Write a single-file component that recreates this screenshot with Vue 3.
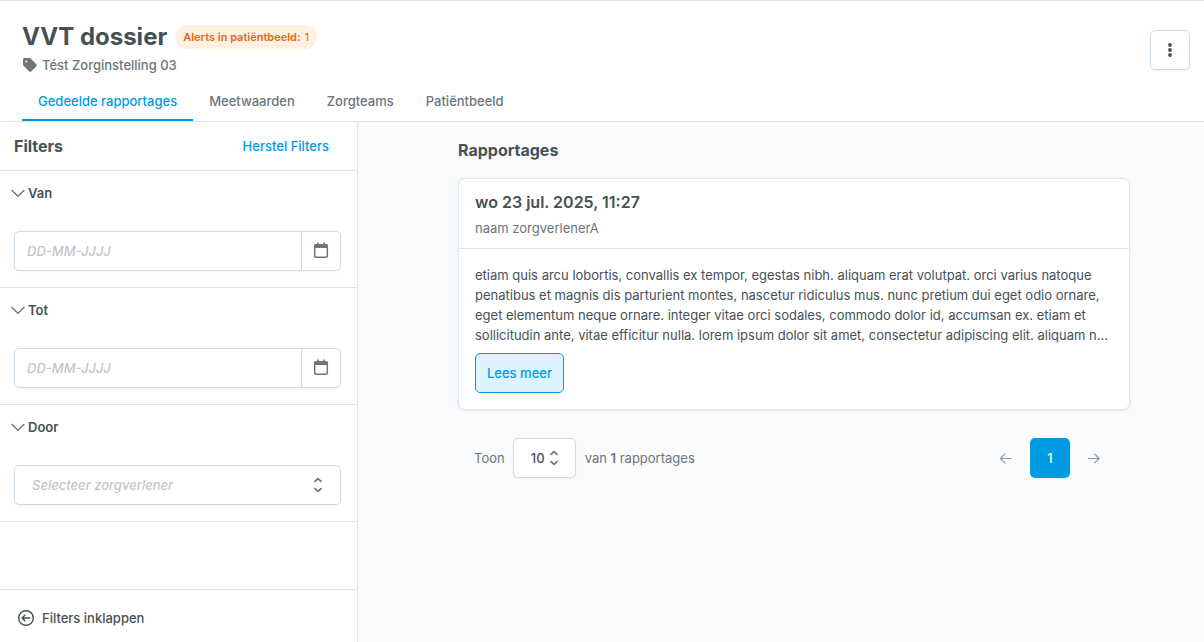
<script setup>
import { ref } from "vue";

const tabs = ["Gedeelde rapportages", "Meetwaarden", "Zorgteams", "Patiëntbeeld"];
const activeTab = ref(0);

const dateFilters = ref([
  { label: "Van", value: "" },
  { label: "Tot", value: "" },
]);

const reportLines = [
  "etiam quis arcu lobortis, convallis ex tempor, egestas nibh. aliquam erat volutpat. orci varius natoque",
  "penatibus et magnis dis parturient montes, nascetur ridiculus mus. nunc pretium dui eget odio ornare,",
  "eget elementum neque ornare. integer vitae orci sodales, commodo dolor id, accumsan ex. etiam et",
  "sollicitudin ante, vitae efficitur nulla. lorem ipsum dolor sit amet, consectetur adipiscing elit. aliquam n…",
];
</script>

<template>
  <div class="page">
    <header class="header">
      <div class="header-top">
        <div>
          <div class="title-row">
            <h1>VVT dossier</h1>
            <span class="badge"><b>Alerts in patiëntbeeld:</b> 1</span>
          </div>
          <div class="institution">
            <svg width="16" height="16" viewBox="0 0 16 16">
              <path
                fill-rule="evenodd"
                d="M1 2.500C1 1.700 1.600 1.100 2.400 1.100h5c.5 0 .9.2 1.200.5l5.600 5.400c.7.7.7 1.700 0 2.400l-4.800 4.800c-.7.7-1.700.7-2.400 0L1.600 8.700c-.4-.4-.6-.8-.6-1.300zM4.300 3.400a1 1 0 1 0 0 2 1 1 0 0 0 0-2z"
              />
            </svg>
            <span>Tést Zorginstelling 03</span>
          </div>
        </div>
        <button class="menu-button">
          <svg width="16" height="16" viewBox="0 0 16 16">
            <circle cx="8" cy="3" r="1.9" />
            <circle cx="8" cy="8" r="1.9" />
            <circle cx="8" cy="13" r="1.9" />
          </svg>
        </button>
      </div>
      <nav class="tabs">
        <button
          v-for="(tab, i) in tabs"
          :key="tab"
          class="tab"
          :class="{ active: i === activeTab }"
          @click="activeTab = i"
        >
          {{ tab }}
        </button>
      </nav>
    </header>

    <div class="body">
      <aside class="sidebar">
        <div class="sidebar-head">
          <h2>Filters</h2>
          <button class="link">Herstel Filters</button>
        </div>
        <section v-for="filter in dateFilters" :key="filter.label" class="filter">
          <div class="filter-title">
            <svg class="chevron" width="14" height="10" viewBox="0 0 14 10">
              <path d="M.6 2 7 8.300 13.400 2" />
            </svg>
            {{ filter.label }}
          </div>
          <div class="field">
            <input v-model="filter.value" type="text" placeholder="DD-MM-JJJJ" />
            <button class="calendar">
              <svg width="16" height="18" viewBox="0 0 16 18">
                <path d="M5 .5v2M11 .5v2" />
                <rect x="1.700" y="2.700" width="12.600" height="12.600" rx="1.200" />
                <path class="bar" d="M1.500 2.500h13v3.500h-13z" />
              </svg>
            </button>
          </div>
        </section>
        <section class="filter">
          <div class="filter-title">
            <svg class="chevron" width="14" height="10" viewBox="0 0 14 10">
              <path d="M.6 2 7 8.300 13.400 2" />
            </svg>
            Door
          </div>
          <div class="field select">
            <span>Selecteer zorgverlener</span>
            <svg class="sort" width="10" height="16" viewBox="0 0 10 16">
              <path d="M1.400 4.900 5 1.700l3.600 3.200M1.400 11.100 5 14.300l3.600-3.200" />
            </svg>
          </div>
        </section>
        <button class="collapse">
          <svg width="16" height="16" viewBox="0 0 16 16">
            <circle cx="8" cy="8" r="7.300" />
            <path d="M12.300 8H4.300M7.300 4.800 4.100 8l3.200 3.200" />
          </svg>
          Filters inklappen
        </button>
      </aside>

      <main class="content">
        <h2>Rapportages</h2>
        <article class="card">
          <div class="card-head">
            <h3>wo 23 jul. 2025, 11:27</h3>
            <div class="author">naam zorgverlenerA</div>
          </div>
          <div class="card-body">
            <p>
              <span v-for="line in reportLines" :key="line">{{ line }}</span>
            </p>
            <button class="more">Lees meer</button>
          </div>
        </article>
        <div class="pagination">
          <span>Toon</span>
          <button class="page-size">
            10
            <svg class="sort" width="10" height="16" viewBox="0 0 10 16">
              <path d="M1.400 4.900 5 1.700l3.600 3.200M1.400 11.100 5 14.300l3.600-3.200" />
            </svg>
          </button>
          <span>van <b>1</b> rapportages</span>
          <div class="pages">
            <svg class="arrow" width="12" height="12" viewBox="0 0 12 12">
              <path d="M11.500 6.500H.5M5.200 1.700.4 6.500l4.800 4.800" />
            </svg>
            <button class="current">1</button>
            <svg class="arrow" width="12" height="12" viewBox="0 0 12 12">
              <path d="M0 6.500h11M6.300 1.700 11.100 6.500l-4.800 4.800" />
            </svg>
          </div>
        </div>
      </main>
    </div>
  </div>
</template>

<style>
body {
  margin: 0;
}
</style>

<style scoped>
* {
  box-sizing: border-box;
}
.page {
  display: flex;
  flex-direction: column;
  height: 100vh;
  border-top: 1px solid #dee0e4;
  background: #fff;
  color: #465156;
  font-family: Inter, sans-serif;
  font-size: 13px;
  line-height: 20px;
}
h1,
h2,
h3,
p {
  margin: 0;
}
button {
  padding: 0;
  border: 0;
  background: none;
  color: inherit;
  font: inherit;
  cursor: pointer;
}
svg {
  flex: none;
  display: block;
}
.header {
  height: 121px;
  border-bottom: 1px solid #dde6ec;
}
.header-top {
  display: flex;
  justify-content: space-between;
  height: 80px;
  padding: 20px 14px 0 22px;
}
.title-row {
  display: flex;
  align-items: center;
  gap: 8px;
  height: 32px;
}
h1 {
  font-size: 24px;
  line-height: 32px;
  font-weight: 700;
}
.badge {
  height: 24px;
  padding: 0 8px;
  border-radius: 12px;
  background: #fff0e1;
  color: #dc6b14;
  font-size: 11px;
  line-height: 24px;
}
.badge b {
  margin-right: 1px;
  font-weight: 600;
}
.institution {
  display: flex;
  align-items: center;
  gap: 4px;
  margin-top: 2px;
  color: #6a767b;
  font-weight: 500;
}
.institution svg {
  fill: #6a767b;
}
.menu-button {
  display: flex;
  align-items: center;
  justify-content: center;
  width: 40px;
  height: 40px;
  margin-top: 9px;
  border: 1px solid #cddce4;
  border-radius: 5px;
  box-shadow: 0 1px 2px rgba(0, 0, 0, 0.06);
}
.menu-button svg {
  fill: #465156;
}
.tabs {
  display: flex;
  height: 40px;
  padding-left: 22px;
}
.tab {
  padding: 2px 16px 0;
  border-bottom: 2px solid transparent;
  color: #6a767b;
  font-weight: 500;
}
.tab.active {
  border-color: #009be3;
  color: #009be3;
}
.body {
  display: flex;
  flex: 1;
  min-height: 0;
}
.sidebar {
  display: flex;
  flex: none;
  flex-direction: column;
  width: 358px;
  border-right: 1px solid #dde6ec;
}
.sidebar-head {
  display: flex;
  align-items: center;
  justify-content: space-between;
  height: 49px;
  padding: 0 28px 0 14px;
  border-bottom: 1px solid #dde6ec;
}
h2 {
  font-size: 16px;
  line-height: 24px;
  font-weight: 700;
}
.link {
  color: #009be3;
  font-weight: 500;
}
.filter {
  height: 117px;
  padding: 12px 16px 0 14px;
  border-bottom: 1px solid #dde6ec;
}
.filter-title {
  display: flex;
  align-items: center;
  gap: 3px;
  margin-left: -3px;
  font-weight: 600;
}
.chevron,
.sort,
.arrow,
.calendar svg,
.collapse svg {
  fill: none;
  stroke: #6a767b;
}
.chevron {
  stroke-width: 1.3;
}
.field {
  display: flex;
  height: 40px;
  margin-top: 28px;
  border: 1px solid #cddce4;
  border-radius: 5px;
  box-shadow: 0 1px 2px rgba(0, 0, 0, 0.05);
}
.field input {
  flex: 1;
  min-width: 0;
  padding: 0 12px;
  border: 0;
  outline: 0;
  background: none;
  font: inherit;
  font-style: italic;
  font-weight: 500;
}
.field input::placeholder {
  color: #c0c7ca;
}
.calendar {
  display: flex;
  align-items: center;
  justify-content: center;
  width: 39px;
  border-left: 1px solid #cddce4;
}
.calendar svg {
  stroke-width: 1.5;
}
.calendar .bar {
  fill: #6a767b;
  stroke: none;
}
.select {
  align-items: center;
  justify-content: space-between;
  padding: 0 17px;
  color: #c0c7ca;
  font-style: italic;
  font-weight: 500;
}
.sort {
  stroke-width: 1.7;
}
.collapse {
  display: flex;
  align-items: center;
  gap: 8px;
  height: 53px;
  margin-top: auto;
  padding: 4px 18px 0;
  border-top: 1px solid #dee3e6;
  font-weight: 500;
}
.collapse svg {
  stroke: #465156;
  stroke-width: 1.4;
}
.content {
  flex: 1;
  min-width: 0;
  padding: 16px 74px 0 100px;
  background: #fafbfd;
}
.card {
  height: 232px;
  margin-top: 16px;
  border: 1px solid #dde6ec;
  border-radius: 7px;
  background: #fff;
  box-shadow: 0 1px 4px rgba(0, 0, 0, 0.07);
}
.card-head {
  height: 70px;
  padding: 11px 16px 0;
  border-bottom: 1px solid #dde6ec;
}
h3 {
  font-size: 16px;
  line-height: 24px;
  font-weight: 600;
}
.author {
  margin-top: 4px;
  color: #6a767b;
}
.card-body {
  padding: 16px;
}
.card-body p span {
  display: block;
  white-space: nowrap;
}
.more {
  height: 40px;
  margin-top: 8px;
  padding: 0 11px;
  border: 1px solid #009be3;
  border-radius: 5px;
  background: #dbf4ff;
  color: #009be3;
  font-weight: 500;
}
.pagination {
  display: flex;
  align-items: center;
  gap: 8.5px;
  margin-top: 28px;
  padding: 0 30px 0 16px;
  color: #6a767b;
}
.pagination b {
  font-weight: 600;
}
.page-size {
  display: flex;
  align-items: center;
  justify-content: center;
  gap: 4px;
  width: 63px;
  height: 40px;
  border: 1px solid #cddce4;
  border-radius: 5px;
  background: #fff;
  box-shadow: 0 1px 2px rgba(0, 0, 0, 0.05);
  color: #465156;
  font-weight: 500;
}
.pages {
  display: flex;
  align-items: center;
  gap: 18px;
  margin-left: auto;
}
.arrow {
  stroke: #8f9a9f;
  stroke-width: 1.2;
}
.current {
  width: 40px;
  height: 40px;
  border-radius: 5px;
  background: #009be3;
  color: #fff;
  font-weight: 500;
}
</style>
